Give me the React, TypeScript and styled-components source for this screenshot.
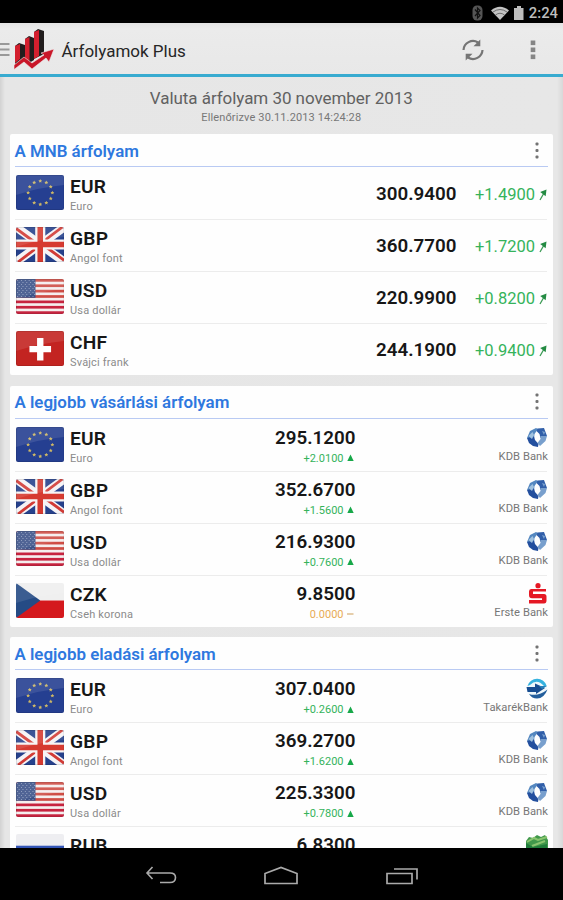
import React from 'react';
import styled, { createGlobalStyle } from 'styled-components';

const GlobalStyle = createGlobalStyle`
  * { box-sizing: border-box; }
  body { margin: 0; background: #000; font-family: Roboto, "Liberation Sans", sans-serif; }
`;

const Screen = styled.div`
  width: 563px;
  height: 900px;
  display: flex;
  flex-direction: column;
  overflow: hidden;
  background: #000;
`;

const StatusBar = styled.div`
  height: 23px;
  flex: none;
  display: flex;
  align-items: center;
  justify-content: flex-end;
  padding: 2px 5px 0 0;
  color: #bdbdbd;
  font-size: 14.8px;
  font-weight: 500;
  line-height: 20px;
  svg { display: block; }
`;

const Clock = styled.span`
  margin: 1px 0 0 5px;
`;

const AppBar = styled.header`
  height: 54px;
  flex: none;
  display: flex;
  align-items: center;
  background: linear-gradient(#e4e4e4, #ebebeb 6px, #e8e8e8);
  border-bottom: 3px solid #38abd0;
  svg { display: block; flex: none; }
`;

const AppTitle = styled.h1`
  margin: 4px auto 0 7.5px;
  font-size: 17px;
  font-weight: 400;
  line-height: 22px;
  color: #262626;
`;

const Content = styled.main`
  height: 771px;
  flex: none;
  overflow: hidden;
  padding: 11px 10px 0 9.5px;
  background: linear-gradient(90deg, #d2d2d2, #e6e6e6 5px, #e7e7e7 557px, #d8d8d8);
`;

const Heading = styled.div`
  height: 46px;
  text-align: center;
  color: #616161;
`;

const DateTitle = styled.div`
  font-size: 17px;
  line-height: 21px;
  letter-spacing: -0.05px;
`;

const Checked = styled.div`
  font-size: 11px;
  line-height: 15px;
  letter-spacing: 0.13px;
  margin-top: 1px;
  color: #777;
`;

const Card = styled.section`
  height: 241px;
  margin-bottom: 10.7px;
  padding: 0 6px 0 5px;
  background: #fefefe;
  border-radius: 2px;
`;

const CardHeader = styled.div`
  height: 33px;
  display: flex;
  align-items: center;
  justify-content: space-between;
  margin-right: -1px;
  padding-right: 9px;
  border-bottom: 1.5px solid #b9caf3;
  svg { display: block; }
`;

const CardTitle = styled.h2`
  margin: 1.6px 0 0;
  font-size: 16.9px;
  line-height: 22px;
  font-weight: 600;
  color: #2e78df;
`;

const Row = styled.div<{ $wide: boolean }>`
  height: 52px;
  display: grid;
  grid-template-columns: ${(p) => (p.$wide ? '55px 1fr 120px 90.5px' : '55px 1fr 110px 191.5px')};
  padding-left: 1px;
  align-items: start;
  & + & { box-shadow: inset 0 1px #ececec; }
`;

const FlagBox = styled.svg`
  display: block;
  width: 48.5px;
  height: 35px;
  margin-top: 8px;
  border-radius: 2px;
`;

const Names = styled.div`
  padding-top: 9px;
  margin-left: -0.5px;
`;

const Code = styled.div`
  font-size: 19.2px;
  line-height: 22px;
  font-weight: 600;
  letter-spacing: 0.2px;
  color: #171717;
`;

const Name = styled.div`
  font-size: 11px;
  line-height: 14px;
  margin-top: 2px;
  letter-spacing: 0.18px;
  color: #8b8b8b;
`;

const Value = styled.div<{ $wide: boolean }>`
  padding-top: ${(p) => (p.$wide ? 16 : 8)}px;
  text-align: right;
  font-size: 18.8px;
  line-height: 22px;
  font-weight: 600;
  color: #171717;
`;

const Change = styled.div<{ $size: 'big' | 'small'; $flat?: boolean }>`
  display: flex;
  align-items: center;
  justify-content: flex-end;
  gap: 3px;
  padding-top: ${(p) => (p.$size === 'big' ? 17 : 2)}px;
  padding-right: ${(p) => (p.$size === 'big' ? 0 : 2)}px;
  font-size: ${(p) => (p.$size === 'big' ? 16.5 : 11)}px;
  line-height: ${(p) => (p.$size === 'big' ? 22 : 15)}px;
  font-weight: 400;
  color: ${(p) => (p.$flat ? '#e8ab55' : '#35b35b')};
  svg { display: block; flex: none; }
`;

const Bank = styled.div`
  display: flex;
  flex-direction: column;
  align-items: flex-end;
  padding-top: 8px;
  margin-right: -1px;
  font-size: 11.2px;
  line-height: 14px;
  letter-spacing: 0.05px;
  color: #777;
  white-space: nowrap;
  svg { display: block; margin: 0 0.5px 2px 0; }
`;

const NavBar = styled.nav`
  height: 52px;
  flex: none;
  display: flex;
  align-items: center;
  justify-content: center;
  gap: 86px;
  padding: 3px 0 0 1px;
  svg { display: block; }
`;

type Currency = 'EUR' | 'GBP' | 'USD' | 'CHF' | 'CZK' | 'RUB';
type BankName = 'KDB Bank' | 'Erste Bank' | 'TakarékBank' | 'OTP Bank';

const names: Record<Currency, string> = {
  EUR: 'Euro',
  GBP: 'Angol font',
  USD: 'Usa dollár',
  CHF: 'Svájci frank',
  CZK: 'Cseh korona',
  RUB: 'Orosz rubel',
};

const stars = Array.from({ length: 12 }, (_, i) => {
  const a = (i * Math.PI) / 6;
  return { x: 24 + 12 * Math.sin(a), y: 17.7 - 11.7 * Math.cos(a) };
});

const starPoints = (cx: number, cy: number) =>
  Array.from({ length: 10 }, (_, i) => {
    const r = i % 2 ? 1 : 2;
    const a = (i * Math.PI) / 5;
    return `${cx + r * Math.sin(a)},${cy - r * Math.cos(a)}`;
  }).join(' ');

function FlagArt({ code }: { code: Currency }) {
  switch (code) {
    case 'EUR':
      return (
        <>
          <rect width="48" height="35" fill="#253f91" />
          {stars.map((s, i) => (
            <polygon key={i} points={starPoints(s.x, s.y)} fill="#cdb766" />
          ))}
        </>
      );
    case 'GBP':
      return (
        <>
          <rect width="48" height="35" fill="#26418c" />
          <path d="M0 0L48 35M48 0L0 35" stroke="#f5f3f5" strokeWidth="8.5" />
          <path d="M0 1.5L21 17M48 33.5L27 18M46 0L25 16M2 35L23 19" stroke="#d23b36" strokeWidth="2.8" />
          <path d="M24 0V35M0 17.5H48" stroke="#f7f4f4" strokeWidth="10" />
          <path d="M24 0V35M0 17.5H48" stroke="#d63a30" strokeWidth="5.5" />
        </>
      );
    case 'USD':
      return (
        <>
          <rect width="48" height="35" fill="#f5eeee" />
          {[0, 1, 2, 3, 4, 5, 6].map((i) => (
            <rect key={i} y={i * 5.38} width="48" height="2.7" fill={i > 3 ? '#c7233f' : '#cf4c44'} />
          ))}
          <rect width="19.3" height="18.8" fill="#3d5389" />
          {Array.from({ length: 45 }, (_, i) => (
            <circle
              key={i}
              cx={1.6 + (i % 5) * 3.8 + (Math.floor(i / 5) % 2) * 1.5}
              cy={1.6 + Math.floor(i / 5) * 2}
              r="0.5"
              fill="#9dabc9"
            />
          ))}
        </>
      );
    case 'CHF':
      return (
        <>
          <rect width="48" height="35" fill="#c32421" />
          <path d="M24 7V29.5M13.3 18.2H34.7" stroke="#fff" strokeWidth="6.3" />
        </>
      );
    case 'CZK':
      return (
        <>
          <rect width="48" height="17.5" fill="#efefef" />
          <rect y="17.5" width="48" height="17.5" fill="#d4191d" />
          <path d="M0 0L24 17.5L0 35Z" fill="#254b85" />
        </>
      );
    case 'RUB':
      return (
        <>
          <rect width="48" height="11.7" fill="#eeeef1" />
          <rect y="11.7" width="48" height="11.7" fill="#3355b5" />
          <rect y="23.4" width="48" height="11.6" fill="#cb2828" />
        </>
      );
  }
}

function Flag({ code }: { code: Currency }) {
  return (
    <FlagBox viewBox="0 0 48 35" preserveAspectRatio="none">
      <FlagArt code={code} />
      {code !== 'RUB' && <path d="M0 0H48V10Q25 12 0 20Z" fill="#fff" opacity="0.1" />}
      {code !== 'RUB' && code !== 'CZK' && (
        <rect x="0.5" y="0.5" width="47" height="34" rx="2" fill="none" stroke="#000" strokeOpacity="0.1" />
      )}
    </FlagBox>
  );
}

function BankLogo({ bank }: { bank: BankName }) {
  switch (bank) {
    case 'KDB Bank':
      return (
        <svg width="22" height="21" viewBox="0 0 22 21">
          <path d="M1 11L4 4L10 1L12 2L8.5 7L8 12Z" fill="#5588c0" />
          <path d="M1 11L8 9.5L9 13L12.5 17L12 20L7 19L3 16Z" fill="#234f9e" />
          <path d="M11.5 1.5L18 1L21 9L14.5 11L13.5 7L10.5 4Z" fill="#315fa9" />
          <path d="M14.5 9L21 9L19.5 14L14 19L11.5 16L14.5 12Z" fill="#789fcd" />
          <path d="M2.5 9L6.5 5L8 8L6 12Z" fill="#a0c1de" />
          <path d="M16 4L19 5L18 8Z" fill="#7ba2cf" />
        </svg>
      );
    case 'Erste Bank':
      return (
        <svg width="20" height="21" viewBox="0 0 20 21">
          <circle cx="10" cy="2.7" r="2.6" fill="#e51824" />
          <path
            d="M3 6H18V8.6H5V11H16Q18.5 11 18.5 13.5V17.5Q18.5 20.5 16 20.5H1V17H14V15.2H4Q1 15.2 1 12V8.5Q1 6 3 6Z"
            fill="#e51824"
          />
        </svg>
      );
    case 'TakarékBank':
      return (
        <svg width="22" height="21" viewBox="0 0 22 21">
          <circle cx="11" cy="10.5" r="10" fill="#edf7fb" />
          <path d="M1.5 8A10 10 0 0 1 20.7 8L18 8Q11 0 4 7Z" fill="#35b2df" />
          <path d="M0.5 9H9V5.5L19 10L10 16V14H1.5Z" fill="#174d91" />
          <path d="M13 8H21L16 11Z" fill="#2580ba" />
          <path d="M3 16Q12 19 21.5 11.5Q18 20.5 11 20.5Q6 20.5 3 16Z" fill="#235e9c" />
        </svg>
      );
    case 'OTP Bank':
      return (
        <svg width="22" height="21" viewBox="0 0 22 21">
          <path d="M0 7L3 3L7 4L11 1L15 3L19 1L22 6V21H0Z" fill="#41984b" />
          <path d="M1 8L8 4L12 6L21 3M6 12L19 7" stroke="#8ac56f" strokeWidth="2" fill="none" />
          <path d="M0 9L7 13L21 10V21H0Z" fill="#217d3b" />
        </svg>
      );
  }
}

const Dots = () => (
  <svg width="4" height="17" viewBox="0 0 4 17" fill="#737373">
    <rect x="0.5" y="0.5" width="3" height="3" rx="1" />
    <rect x="0.5" y="7" width="3" height="3" rx="1" />
    <rect x="0.5" y="13.5" width="3" height="3" rx="1" />
  </svg>
);

const UpDiagonal = () => (
  <svg width="9" height="12" viewBox="0 0 9 12">
    <path d="M2 11L6 4" stroke="#3c9b55" strokeWidth="1.3" />
    <path d="M2.2 3L8.5 .5L7.7 7.2Z" fill="#248b43" />
  </svg>
);

const Trend = ({ flat }: { flat?: boolean }) => (
  <svg width="7" height="8" viewBox="0 0 7 8">
    {flat ? (
      <path d="M0 4H6.5" stroke="#d8b37d" strokeWidth="1.3" />
    ) : (
      <path d="M3.5 0.5L6.7 7H0.3Z" fill="#17a849" />
    )}
  </svg>
);

interface Rate {
  code: Currency;
  value: string;
  change: string;
  bank?: BankName;
}

const cards: { title: string; rates: Rate[] }[] = [
  {
    title: 'A MNB árfolyam',
    rates: [
      { code: 'EUR', value: '300.9400', change: '+1.4900' },
      { code: 'GBP', value: '360.7700', change: '+1.7200' },
      { code: 'USD', value: '220.9900', change: '+0.8200' },
      { code: 'CHF', value: '244.1900', change: '+0.9400' },
    ],
  },
  {
    title: 'A legjobb vásárlási árfolyam',
    rates: [
      { code: 'EUR', value: '295.1200', change: '+2.0100', bank: 'KDB Bank' },
      { code: 'GBP', value: '352.6700', change: '+1.5600', bank: 'KDB Bank' },
      { code: 'USD', value: '216.9300', change: '+0.7600', bank: 'KDB Bank' },
      { code: 'CZK', value: '9.8500', change: '0.0000', bank: 'Erste Bank' },
    ],
  },
  {
    title: 'A legjobb eladási árfolyam',
    rates: [
      { code: 'EUR', value: '307.0400', change: '+0.2600', bank: 'TakarékBank' },
      { code: 'GBP', value: '369.2700', change: '+1.6200', bank: 'KDB Bank' },
      { code: 'USD', value: '225.3300', change: '+0.7800', bank: 'KDB Bank' },
      { code: 'RUB', value: '6.8300', change: '', bank: 'OTP Bank' },
    ],
  },
];

function RateRow({ rate }: { rate: Rate }) {
  const wide = !rate.bank;
  const flat = rate.change === '0.0000';
  const clipped = rate.code === 'RUB';
  return (
    <Row $wide={wide}>
      <Flag code={rate.code} />
      <Names>
        <Code>{rate.code}</Code>
        {!clipped && <Name>{names[rate.code]}</Name>}
      </Names>
      <Value $wide={wide}>
        {rate.value}
        {!wide && rate.change && (
          <Change $size="small" $flat={flat}>
            {rate.change}
            <Trend flat={flat} />
          </Change>
        )}
      </Value>
      {rate.bank ? (
        <Bank>
          <BankLogo bank={rate.bank} />
          {!clipped && rate.bank}
        </Bank>
      ) : (
        <Change $size="big">
          {rate.change}
          <UpDiagonal />
        </Change>
      )}
    </Row>
  );
}

const StatusIcons = () => (
  <svg width="52" height="18" viewBox="0 0 52 18">
    <rect x="0.5" y="1.5" width="10" height="15" rx="4.5" fill="#555" />
    <path d="M3 5.5L8 11.5L5.5 14V4L8 6.5L3 12" fill="none" stroke="#111" strokeWidth="1.2" />
    <path d="M19 6.5Q28 -1 37 6.5L28 16Z" fill="#c4c4c4" />
    <path d="M21 8Q28 3 35 8M23.5 11Q28 7.5 32.5 11" fill="none" stroke="#555" strokeWidth="0.8" />
    <path d="M42 4H45V2H49V4H51.5V16H42Z" fill="#bdbdbd" />
  </svg>
);

const AppLogo = () => (
  <svg width="54" height="42" viewBox="0 0 54 42">
    <path d="M0 16H9.5M0 21.5H9.5M0 27H9.5" stroke="#999" strokeWidth="2" />
    <path d="M15 18L19 15L25 17V32L19 34L15 36Z" fill="#211d1d" />
    <path d="M15 18L20 16V31L15 35Z" fill="#d31f2e" />
    <path d="M25 11L29 8L34 10V32L29 35L25 31Z" fill="#211d1d" />
    <path d="M25 11L29.5 9V33L25 31Z" fill="#d31f2e" />
    <path d="M34 4L38 1L44 3V26L34 31Z" fill="#211d1d" />
    <path d="M34 4L39 2V28L34 31Z" fill="#d31f2e" />
    <path d="M14 37L24 29L32 35L44 27L41 25L54 21L49 34L46 30L32 41L24 34L14 41.5Z" fill="#c91729" stroke="#eee" strokeWidth="0.6" />
  </svg>
);

const RefreshIcon = () => (
  <svg width="24" height="24" viewBox="0 0 24 24" fill="none" stroke="#757575" strokeWidth="2.2">
    <path d="M2.5 12A9.5 9.5 0 0 1 17 4.5M21.5 12A9.5 9.5 0 0 1 7 19.5" />
    <path d="M19.3 1.5V8.3H12.5ZM4.7 22.5V15.7H11.5Z" fill="#757575" stroke="none" />
  </svg>
);

const MenuGap = styled.div`
  display: flex;
  align-items: center;
  gap: 45px;
  margin: 3px 27px 0 0;
`;

export default function App() {
  return (
    <Screen>
      <GlobalStyle />
      <StatusBar>
        <StatusIcons />
        <Clock>2:24</Clock>
      </StatusBar>
      <AppBar>
        <AppLogo />
        <AppTitle>Árfolyamok Plus</AppTitle>
        <MenuGap>
          <RefreshIcon />
          <svg width="6" height="20" viewBox="0 0 6 20" fill="#858585">
            <rect x="0.7" y="0.5" width="4.6" height="4.6" />
            <rect x="0.7" y="7.5" width="4.6" height="4.6" />
            <rect x="0.7" y="14.5" width="4.6" height="4.6" />
          </svg>
        </MenuGap>
      </AppBar>
      <Content>
        <Heading>
          <DateTitle>Valuta árfolyam 30 november 2013</DateTitle>
          <Checked>Ellenőrizve 30.11.2013 14:24:28</Checked>
        </Heading>
        {cards.map((card) => (
          <Card key={card.title}>
            <CardHeader>
              <CardTitle>{card.title}</CardTitle>
              <Dots />
            </CardHeader>
            {card.rates.map((rate) => (
              <RateRow key={rate.code} rate={rate} />
            ))}
          </Card>
        ))}
      </Content>
      <NavBar>
        <svg width="32" height="20" viewBox="0 0 32 20" fill="none" stroke="#aaa" strokeWidth="1.6">
          <path d="M7.5 1L2 7L7.5 13M2 7H25Q30.5 7 30.5 11.5Q30.5 16.5 25 16.5H15" />
        </svg>
        <svg width="36" height="20" viewBox="0 0 36 20" fill="none" stroke="#aaa" strokeWidth="1.7">
          <path d="M2 17.5V7.5L18 1.5L34 7.5V17.5Z" />
        </svg>
        <svg width="34" height="20" viewBox="0 0 34 20" fill="none" stroke="#aaa" strokeWidth="1.7">
          <path d="M2 7.5H27V17.5H2ZM9 3H32V13.5" />
        </svg>
      </NavBar>
    </Screen>
  );
}
